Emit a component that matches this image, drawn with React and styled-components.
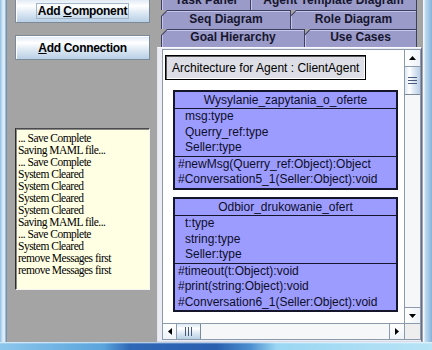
import React from 'react';
import styled, { createGlobalStyle } from 'styled-components';

const GlobalStyle = createGlobalStyle`
  * { box-sizing: border-box; }
  html, body { margin: 0; padding: 0; }
  body {
    width: 432px; height: 350px; overflow: hidden; background: #a4a4a4;
    font-family: "Liberation Sans", Arial, sans-serif;
  }
`;

const OCEAN_V = 'linear-gradient(to bottom, #dde8f3 0%, #ffffff 30%, #dde8f3 60%, #b8cfe5 100%)';
const OCEAN_H = 'linear-gradient(to right, #dde8f3 0%, #ffffff 30%, #dde8f3 60%, #b8cfe5 100%)';
const SANS = '"Liberation Sans", Arial, sans-serif';

const Window = styled.div`
  width: 432px; height: 350px; display: flex; flex-direction: column; overflow: hidden;
`;
const FrameRow = styled.div`
  display: flex; flex: 1; min-height: 0;
`;
const SideEdge = styled.div`
  flex: none; width: ${p => p.$w}px; background: ${p => p.$bg};
`;
const BottomEdge = styled.div`
  flex: none; height: 8px;
  background:
    linear-gradient(to bottom, rgba(236,246,253,0.95) 0, rgba(236,246,253,0) 2px),
    linear-gradient(to right, #8cc6ec 0%, #5aa4dc 24%, #2f68b6 30%, #2a5fae 50%, #4c8fd0 58%, #9ad6f2 64%, #b8e3f6 100%);
`;
const Body = styled.div`
  flex: 1; display: flex; background: #a4a4a4; overflow: hidden; min-width: 0;
`;

/* ---------- left panel ---------- */
const LeftPanel = styled.div`
  flex: none; width: 150px; padding-left: 8px; margin-top: -2px;
  display: flex; flex-direction: column; align-items: flex-start;
`;
const ActionButton = styled.div`
  width: 135px; height: 25px; margin-top: ${p => p.$gap || 0}px;
  display: flex; align-items: center; justify-content: center;
  border: 1px solid #7a8a99; box-shadow: inset 1px 1px 0 #ffffff;
  background: ${OCEAN_V};
  font: bold 12px ${SANS}; letter-spacing: -0.3px; color: #000;
`;
const ButtonLabel = styled.span`
  line-height: 14px; padding: 0 1px;
  border: 1px solid ${p => (p.$focused ? '#a2b6cb' : 'transparent')};
  u { text-decoration: underline; text-underline-offset: 1px; }
`;
const LogArea = styled.div`
  width: 135px; height: 162px; margin-top: 68px;
  background: #ffffe4;
  border-top: 1px solid #4a4a4a; border-left: 1px solid #2e2e2e;
  border-right: 1px solid #f4f4f4; border-bottom: 1px solid #f4f4f4;
  box-shadow: inset 1px 1px 0 #8a8a8a;
  padding: 3px 2px;
  font: 11.5px "Liberation Serif", "Times New Roman", serif; letter-spacing: -0.5px;
  line-height: 12px; color: #000; white-space: pre; overflow: hidden;
`;

/* ---------- right / tabs ---------- */
const RightColumn = styled.div`
  flex: 1; min-width: 0; margin-top: -9px; display: flex; flex-direction: column;
`;
const TabRow = styled.div`
  flex: none; height: ${p => p.$h}px; display: flex; padding: 0 6px 0 4px;
`;
const TabShape = styled.div`
  flex: none; width: ${p => p.$w}px; height: 100%;
  background: #3e3e5e; padding: 1px 1px 0 1px;
  clip-path: polygon(6px 0, 100% 0, 100% 100%, 0 100%, 0 6px);
  & + & { margin-left: -1px; }
`;
const TabFace = styled.div`
  height: 100%; display: flex; align-items: center; justify-content: center; padding-bottom: 3px;
  background: #9b9bc9;
  clip-path: polygon(5.4px 0, 100% 0, 100% 100%, 0 100%, 0 5.4px);
  box-shadow: inset 1px 1px 0 #c6c6ee;
  font: bold 12px ${SANS}; color: #16162e; white-space: nowrap;
`;
const ContentPanel = styled.div`
  flex: 1; min-height: 0; display: flex; margin-right: 1px;
  background: #ececf4;
  border-top: 1px solid #fbfbff; border-left: 1px solid #e4e4f0;
  border-right: 1px solid #6a6a86; border-bottom: 1px solid #dadae6;
  padding: 1px 0 1px 4px;
`;
const ScrollPane = styled.div`
  flex: 1; min-width: 0; display: grid;
  grid-template-columns: 1fr 16px; grid-template-rows: 1fr 16px;
  border: 1px solid #8b9bab;
`;
const Viewport = styled.div`
  grid-column: 1; grid-row: 1; background: #ffffff; overflow: hidden; min-height: 0;
`;
const Canvas = styled.div`
  display: flex; flex-direction: column; align-items: flex-start; padding: 5px 0 0 2px;
`;
const ArchButton = styled.div`
  height: 25px; padding: 0 6px; display: flex; align-items: center;
  background: #dedee6; border: 1px solid #000;
  box-shadow: inset 1px 1px 0 #5a5a5a, inset -1px -1px 0 #ffffff;
  font: 12px ${SANS}; color: #000; white-space: nowrap;
`;
const ClassBox = styled.div`
  width: 225px; margin: ${p => p.$top}px 0 0 8px;
  background: #9c9cff; border: 2px solid #15152b;
  font: 12px ${SANS}; color: #0e0e28;
`;
const ClassName = styled.div`
  height: 17px; line-height: 17px; text-align: center; border-bottom: 1px solid #15152b;
  white-space: nowrap;
`;
const Section = styled.div`
  padding-left: ${p => p.$indent}px;
  border-bottom: ${p => (p.$sep ? '1px solid #15152b' : 'none')};
`;
const Line = styled.div`
  height: 15.5px; line-height: 15.5px; white-space: nowrap;
`;

/* ---------- scrollbars ---------- */
const VBar = styled.div`
  grid-column: 2; grid-row: 1; min-height: 0;
  display: flex; flex-direction: column;
  background: #f5f7f9; border-left: 1px solid #8b9bab;
`;
const HBar = styled.div`
  grid-column: 1; grid-row: 2; display: flex;
  background: #f5f7f9; border-top: 1px solid #8b9bab;
`;
const Corner = styled.div`
  grid-column: 2; grid-row: 2; background: #eeeeee;
  border-left: 1px solid #8b9bab; border-top: 1px solid #8b9bab;
`;
const ArrowButton = styled.div`
  flex: none; display: flex; align-items: center; justify-content: center;
  ${p => (p.$vertical ? `height: ${p.$len}px;` : `width: ${p.$len}px;`)}
  background: ${p => (p.$vertical ? 'linear-gradient(to right, #ffffff, #eef3f8)' : 'linear-gradient(to bottom, #ffffff, #eef3f8)')};
  border-${p => p.$edge}: 1px solid #8b9bab;
`;
const Thumb = styled.div`
  flex: none; display: flex; align-items: center; justify-content: center;
  ${p => (p.$vertical
    ? `height: ${p.$len}px; background: ${OCEAN_H}; border-bottom: 1px solid #7a8a99;`
    : `width: ${p.$len}px; background: ${OCEAN_V}; border-right: 1px solid #7a8a99;`)}
`;
const Track = styled.div`
  flex: 1;
`;

const Arrow = ({ dir }) => {
  const pts = {
    up: '0,4 3.5,0 7,4',
    down: '0,0 7,0 3.5,4',
    left: '4,0 4,7 0,3.5',
    right: '0,0 0,7 4,3.5',
  }[dir];
  const vert = dir === 'up' || dir === 'down';
  return (
    <svg width={vert ? 7 : 4} height={vert ? 4 : 7} viewBox={vert ? '0 0 7 4' : '0 0 4 7'}>
      <polygon points={pts} fill="#000" />
    </svg>
  );
};

const Grip = ({ vertical }) =>
  vertical ? (
    <svg width="9" height="7" viewBox="0 0 9 7">
      {[0, 3, 6].map(y => (
        <rect key={y} x="0" y={y} width="9" height="1" fill="#4a5a7a" />
      ))}
    </svg>
  ) : (
    <svg width="7" height="9" viewBox="0 0 7 9">
      {[0, 3, 6].map(x => (
        <rect key={x} x={x} y="0" width="1" height="9" fill="#4a5a7a" />
      ))}
    </svg>
  );

const LOG = [
  '... Save Complete',
  'Saving MAML file...',
  '... Save Complete',
  'System Cleared',
  'System Cleared',
  'System Cleared',
  'System Cleared',
  'Saving MAML file...',
  '... Save Complete',
  'System Cleared',
  'remove Messages first',
  'remove Messages first',
];

const TAB_ROWS = [
  { h: 19, tabs: [['Task Panel', 90], ['Agent Template Diagram', 167]] },
  { h: 19, tabs: [['Seq Diagram', 130], ['Role Diagram', 127]] },
  { h: 18, tabs: [['Goal Hierarchy', 144], ['Use Cases', 113]] },
];

const CLASSES = [
  {
    name: 'Wysylanie_zapytania_o_oferte',
    attrs: ['msg:type', 'Querry_ref:type', 'Seller:type'],
    methods: ['#newMsg(Querry_ref:Object):Object', '#Conversation5_1(Seller:Object):void'],
    top: 10,
  },
  {
    name: 'Odbior_drukowanie_ofert',
    attrs: ['t:type', 'string:type', 'Seller:type'],
    methods: ['#timeout(t:Object):void', '#print(string:Object):void', '#Conversation6_1(Seller:Object):void'],
    top: 7.5,
  },
];

export default function App() {
  return (
    <>
      <GlobalStyle />
      <Window>
        <FrameRow>
          <SideEdge
            $w={7}
            $bg="linear-gradient(to right, #8fbde2 0, #c4dff4 2px, #e6f2fb 4px, #cfe2f2 5px, #7292b2 6px, #7292b2 7px)"
          />
          <Body>
            <LeftPanel>
              <ActionButton>
                <ButtonLabel $focused>
                  Add <u>C</u>omponent
                </ButtonLabel>
              </ActionButton>
              <ActionButton $gap={12}>
                <ButtonLabel>
                  <u>A</u>dd Connection
                </ButtonLabel>
              </ActionButton>
              <LogArea>{LOG.join('\n')}</LogArea>
            </LeftPanel>
            <RightColumn>
              {TAB_ROWS.map((row, i) => (
                <TabRow key={i} $h={row.h}>
                  {row.tabs.map(([label, w]) => (
                    <TabShape key={label} $w={w}>
                      <TabFace>{label}</TabFace>
                    </TabShape>
                  ))}
                </TabRow>
              ))}
              <ContentPanel>
                <ScrollPane>
                  <Viewport>
                    <Canvas>
                      <ArchButton>Architecture for Agent : ClientAgent</ArchButton>
                      {CLASSES.map(c => (
                        <ClassBox key={c.name} $top={c.top}>
                          <ClassName>{c.name}</ClassName>
                          <Section $indent={10} $sep>
                            {c.attrs.map(a => (
                              <Line key={a}>{a}</Line>
                            ))}
                          </Section>
                          <Section $indent={3}>
                            {c.methods.map(m => (
                              <Line key={m}>{m}</Line>
                            ))}
                          </Section>
                        </ClassBox>
                      ))}
                    </Canvas>
                  </Viewport>
                  <VBar>
                    <ArrowButton $vertical $len={17} $edge="bottom">
                      <Arrow dir="up" />
                    </ArrowButton>
                    <Thumb $vertical $len={28}>
                      <Grip vertical />
                    </Thumb>
                    <Track />
                    <ArrowButton $vertical $len={16} $edge="top">
                      <Arrow dir="down" />
                    </ArrowButton>
                  </VBar>
                  <HBar>
                    <ArrowButton $len={14} $edge="right">
                      <Arrow dir="left" />
                    </ArrowButton>
                    <Thumb $len={24}>
                      <Grip />
                    </Thumb>
                    <Track />
                    <ArrowButton $len={15} $edge="left">
                      <Arrow dir="right" />
                    </ArrowButton>
                  </HBar>
                  <Corner />
                </ScrollPane>
              </ContentPanel>
            </RightColumn>
          </Body>
          <SideEdge
            $w={9}
            $bg="linear-gradient(to right, #f2f7fc 0, #f2f7fc 1px, #c2ddf1 2px, #a9cce8 5px, #86b2da 9px)"
          />
        </FrameRow>
        <BottomEdge />
      </Window>
    </>
  );
}
